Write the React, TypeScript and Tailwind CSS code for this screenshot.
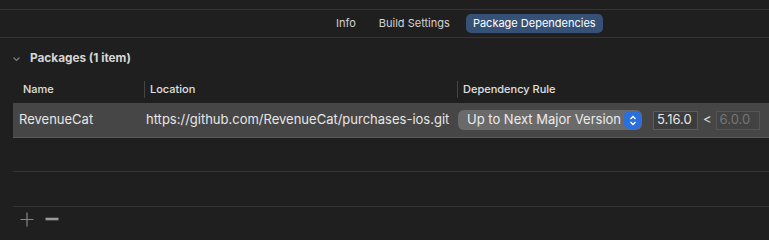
import React from 'react';

const font = { fontFamily: 'Inter, "Liberation Sans", sans-serif' };

const App: React.FC = () => {
  return (
    <div className="w-[769px] h-[240px] bg-[#1f1f1f] text-[#dfdfdf] overflow-hidden" style={font}>
      <div className="h-[10px] border-b border-[#353535]" />
      <div className="h-[28px] border-b border-[#353535] flex items-center pl-[330px] text-[11px] text-[#d4d4d4]">
        <span className="px-[6px]">Info</span>
        <span className="ml-[11px] px-[6px]">Build Settings</span>
        <span className="ml-[10px] h-[19px] w-[137px] justify-center rounded-[5px] bg-[#355176] text-white flex items-center">Package Dependencies</span>
      </div>
      <div className="h-[38px] flex items-center pl-[12px] pt-[3px] gap-[9px]">
        <svg width="9" height="10" viewBox="0 0 9 10" className="mt-[1px]">
          <path d="M1.5 3.5 L4.5 6.5 L7.5 3.5" fill="none" stroke="#7e7e7e" strokeWidth="1.2" />
        </svg>
        <span className="text-[11.8px] font-bold text-[#d6d6d6]">Packages (1 item)</span>
      </div>
      <div className="ml-[13px]">
        <div className="h-[27px] flex items-center text-[11px] font-medium text-[#e0e0e0]">
          <div className="w-[131px] pl-[10px]">Name</div>
          <div className="w-[313px] h-[17px] border-l border-[#444] pl-[5px] flex items-center">Location</div>
          <div className="h-[17px] border-l border-[#444] pl-[5px] flex items-center">Dependency Rule</div>
        </div>
        <div className="h-[35px] bg-[#464646] border-b border-[#5a5a5a] flex items-center text-[13px] text-[#e6e6e6]">
          <div className="w-[131px] pl-[6px]">RevenueCat</div>
          <div className="w-[314px] pl-[2px]">https://github.com/RevenueCat/purchases-ios.git</div>
          <div className="w-[184px] h-[20px] rounded-[6px] bg-[#6a6a6a] flex items-center justify-between pl-[9px] pr-[1px] text-[#ececec]">
            <span>Up to Next Major Version</span>
            <span className="w-[17px] h-[18px] rounded-[5px] bg-[#2a6fdb] flex items-center justify-center">
              <svg width="8" height="11" viewBox="0 0 8 11">
                <path d="M1.5 4 L4 1.5 L6.5 4 M1.5 7 L4 9.5 L6.5 7" fill="none" stroke="white" strokeWidth="1.3" />
              </svg>
            </span>
          </div>
          <div className="ml-[11px] w-[45px] h-[19px] border border-[#5c5c5c] bg-[#3c3c3c] flex items-center pl-[3px]">5.16.0</div>
          <span className="ml-[5px] mr-[4px] text-[#e0e0e0]">&lt;</span>
          <div className="w-[44px] h-[19px] border border-[#555] bg-[#424242] flex items-center pl-[3px] text-[#767676]">6.0.0</div>
        </div>
        <div className="h-[34px] border-b border-[#353535]" />
        <div className="h-[35px] border-b border-[#353535]" />
      </div>
      <div className="flex items-center gap-[11px] pl-[20px] h-[24px]">
        <svg width="14" height="15" viewBox="0 0 14 15">
          <path d="M7 0.5 V14.5 M0.5 7.5 H13.5" stroke="#858585" strokeWidth="1.2" />
        </svg>
        <svg width="14" height="14" viewBox="0 0 14 14">
          <path d="M0.5 7 H13.5" stroke="#9a9a9a" strokeWidth="2.6" />
        </svg>
      </div>
    </div>
  );
};

export default App;
